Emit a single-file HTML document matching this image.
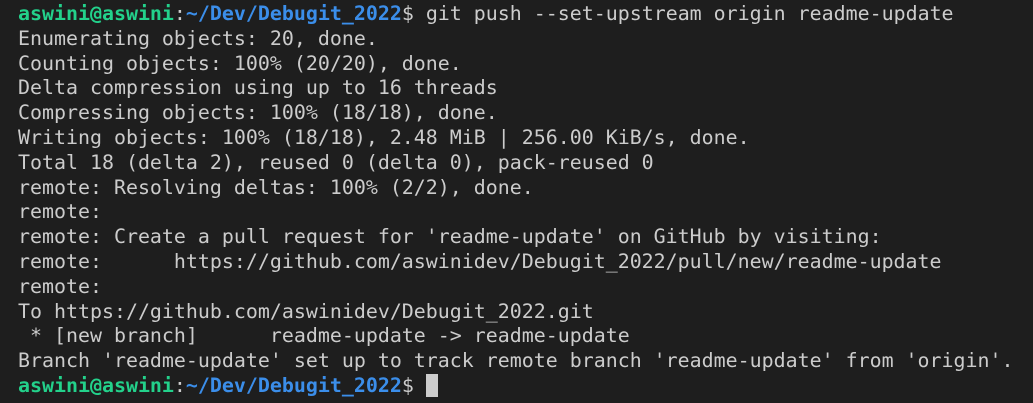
<!DOCTYPE html>
<html><head><meta charset="utf-8"><style>
html,body{margin:0;padding:0;background:#1e1e1e;width:1033px;height:403px;overflow:hidden}
pre{margin:0;position:absolute;left:18px;top:2px;font-family:"DejaVu Sans Mono","Liberation Mono",monospace;font-size:19.93px;line-height:24.8px;color:#cccccc;white-space:pre}
.l{display:block;height:24.8px}
.g{color:#23d18b;font-weight:bold}.b{color:#3b8eea;font-weight:bold}
.c{display:inline-block;width:12px;height:23px;background:#cccccc;vertical-align:-5px}
</style></head><body><pre><span class="l"><span class="g">aswini@aswini</span>:<span class="b">~/Dev/Debugit_2022</span>$ git push --set-upstream origin readme-update</span><span class="l">Enumerating objects: 20, done.</span><span class="l">Counting objects: 100% (20/20), done.</span><span class="l">Delta compression using up to 16 threads</span><span class="l">Compressing objects: 100% (18/18), done.</span><span class="l">Writing objects: 100% (18/18), 2.48 MiB | 256.00 KiB/s, done.</span><span class="l">Total 18 (delta 2), reused 0 (delta 0), pack-reused 0</span><span class="l">remote: Resolving deltas: 100% (2/2), done.</span><span class="l">remote:</span><span class="l">remote: Create a pull request for 'readme-update' on GitHub by visiting:</span><span class="l">remote:      https://github.com/aswinidev/Debugit_2022/pull/new/readme-update</span><span class="l">remote:</span><span class="l">To https://github.com/aswinidev/Debugit_2022.git</span><span class="l"> * [new branch]      readme-update -&gt; readme-update</span><span class="l">Branch 'readme-update' set up to track remote branch 'readme-update' from 'origin'.</span><span class="l"><span class="g">aswini@aswini</span>:<span class="b">~/Dev/Debugit_2022</span>$ <span class="c"></span></span></pre></body></html>
